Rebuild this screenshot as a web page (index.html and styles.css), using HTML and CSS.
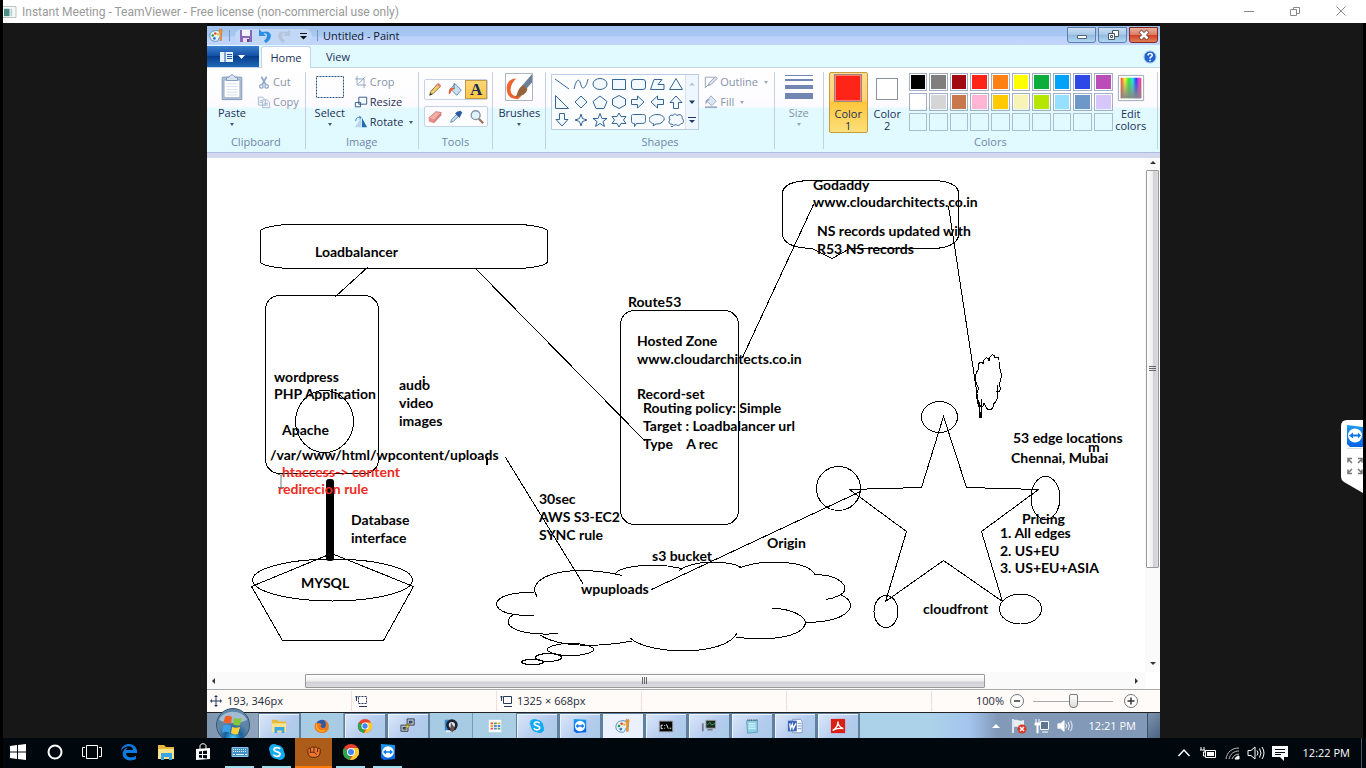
FILE: index.html
```html
<!DOCTYPE html>
<html lang="en">
<head>
<meta charset="utf-8">
<title>Instant Meeting - TeamViewer</title>
<link rel="stylesheet" href="styles.css">
</head>
<body>
<svg class="defs" aria-hidden="true">
  <defs>
    <linearGradient id="rainbow"><stop offset="0" stop-color="#f33"/><stop offset=".2" stop-color="#ff3"/><stop offset=".4" stop-color="#2e3"/><stop offset=".58" stop-color="#2ee"/><stop offset=".75" stop-color="#23f"/><stop offset=".9" stop-color="#f3e"/><stop offset="1" stop-color="#f34"/></linearGradient>
    <linearGradient id="fade" x2="0" y2="1"><stop offset="0" stop-color="#888" stop-opacity="0"/><stop offset="1" stop-color="#888"/></linearGradient>
    <radialGradient id="orb" cy=".9"><stop offset="0" stop-color="#4fd0f4"/><stop offset=".5" stop-color="#175f9c"/><stop offset="1" stop-color="#5f86a8"/></radialGradient>
    <linearGradient id="tv" x2="0" y2="1"><stop offset="0" stop-color="#1c9bf5"/><stop offset="1" stop-color="#0563e6"/></linearGradient>
  </defs>
  <symbol id="palette" viewBox="0 0 18 18"><path d="M1 10C1 5 5 3 9 3s6 3 6 6c0 2-2 2-3 3s0 4-4 4c-4 0-7-2-7-6z" fill="#e2f1fb" stroke="#4b86b8"/><circle cx="4.500" cy="9" r="1.500" fill="#2b9e3c"/><circle cx="7.500" cy="6.500" r="1.500" fill="#e84b2e"/><circle cx="10.500" cy="7.500" r="1.300" fill="#f5b400"/><circle cx="6.500" cy="12.500" r="1.600" fill="#2d73d8"/><path d="M12 3l1-2 1 2 1-2 1 2-1 5v7h-2V8z" fill="#f09a2c" stroke="#b56a22" stroke-width=".5"/></symbol>
  <symbol id="folder" viewBox="0 0 18 18"><path d="M1 2h6l2 2h8v11H1z" fill="#e9b93e"/><path d="M1 6h16v10H1z" fill="#fbe38c"/><path d="M4 10h11v7h-3v-3H7v3H4z" fill="#3aa5e4"/></symbol>
  <symbol id="chrome" viewBox="0 0 18 18"><circle cx="9" cy="9" r="8" fill="#e8402f"/><path d="M9 9L2 5a8 8 0 0 0 6 12z" fill="#2fa24d"/><path d="M9 9h8a8 8 0 0 1-9 8l3-5z" fill="#fccb2e"/><path d="M9 5h7a8 8 0 0 1 0 8l-4-1z" fill="#fccb2e"/><circle cx="9" cy="9" r="4" fill="#fff"/><circle cx="9" cy="9" r="3" fill="#4385f0"/></symbol>
  <symbol id="skype" viewBox="0 0 18 18"><circle cx="6" cy="6" r="5" fill="#14aaf0"/><circle cx="12" cy="12" r="5" fill="#14aaf0"/><circle cx="9" cy="9" r="7" fill="#14aaf0"/><path d="M12 6C11 4 6 4 6 6.600 6 9.500 12 8 12 11c0 3-5.500 3-6.500.5" fill="none" stroke="#fff" stroke-width="1.800"/></symbol>
  <symbol id="teamviewer" viewBox="0 0 18 18"><path d="M2 1l14 1v14l-11 1-3-2z" fill="url(#tv)"/><circle cx="9" cy="9" r="5.800" fill="#fff"/><path d="M4 9l3-2.500v1.700h4V6.500L14 9l-3 2.500V9.800H7v1.700z" fill="#0877e8"/></symbol>
  <symbol id="volume" viewBox="0 0 18 18"><path d="M1 6.500h3L8 3v12l-4-3.500H1z"/><path d="M10 6.500q2 2.500 0 5M12.500 4.500q3 4.500 0 9M15 3q4 6 0 12" fill="none"/></symbol>
</svg>

<header class="tv-title">
  <svg class="tv-icon" viewBox="0 0 15 13"><path d="M0 .5h14v12H0" fill="#f5f8f8" stroke="#b4bcbc"/><path d="M1 3h6v8H1z" fill="#4d8d88"/><path d="M8 3h2v8H8z" fill="#b6d4d0"/></svg>
  <span class="tv-name">Instant Meeting - TeamViewer - Free license (non-commercial use only)</span>
  <div class="tv-controls">
    <button aria-label="Minimize"><svg viewBox="0 0 12 12"><path d="M1 6.500h10"/></svg></button>
    <button aria-label="Restore"><svg viewBox="0 0 12 12"><path d="M1.500 4.500h6v6h-6zM4.500 4V2.500h6v6H8"/></svg></button>
    <button aria-label="Close"><svg viewBox="0 0 12 12"><path d="M1.500 1.500l9 9M10.500 1.500l-9 9"/></svg></button>
  </div>
</header>

<main class="viewer">
  <section class="remote">
    <div class="paint-title">
      <svg class="ic16"><use href="#palette"/></svg>
      <i class="bar"></i>
      <div class="quick">
        <button aria-label="Save"><svg viewBox="0 0 14 14"><path d="M1 1h12v12H1z" fill="#8a68b8"/><path d="M3 1h8v6H3z" fill="#f4f4fc"/><path d="M4 9h6v4H4z" fill="#e9def5"/><path d="M8 10h2v3H8z" fill="#62468e"/></svg></button>
        <button aria-label="Undo"><svg viewBox="0 0 14 14"><path d="M1 0v7h7L5.500 4.500C9 3 11 7 6 12l2 2c8-5 6-14-4-11z" fill="#2a8fe4"/></svg></button>
        <button aria-label="Redo"><svg viewBox="0 0 14 14"><path d="M13 0v7H6l2.500-2.500C5 3 3 7 8 12l-2 2C-2 9 0 0 10 3z" fill="#b5c5dc"/></svg></button>
        <button aria-label="Customize toolbar"><svg viewBox="0 0 14 14"><path d="M4 4.500h7" stroke="#111"/><path d="M4 7h7l-3.500 3.500z" fill="#111"/></svg></button>
      </div>
      <i class="bar"></i>
      <h1>Untitled - Paint</h1>
      <div class="win-controls">
        <button aria-label="Minimize Paint"><svg viewBox="0 0 14 12"><path d="M2.500 6.500h9v3h-9z" fill="#fff" stroke="#53657c"/></svg></button>
        <button aria-label="Restore Paint"><svg viewBox="0 0 14 12"><path d="M6.500 1.500h6v6h-6z" fill="#fff" stroke="#44576f"/><path d="M2.500 4.500h6v6h-6z" fill="#fff" stroke="#44576f"/><path d="M4.500 6.500h2v2h-2z" stroke="#44576f" fill="none"/></svg></button>
        <button class="close" aria-label="Close Paint"><svg viewBox="0 0 14 12"><path d="M3 2l8 8M11 2l-8 8" stroke="#71443f" stroke-width="4"/><path d="M3.500 2.500l7 7M10.500 2.500l-7 7" stroke="#fff" stroke-width="2.500"/></svg></button>
      </div>
    </div>

    <nav class="tabs">
      <button class="file" aria-label="Paint menu"><svg viewBox="0 0 28 12"><path d="M1 1h13v10H1z" fill="#e9f3ff"/><path d="M6 1v10" stroke="#1b58a5"/><path d="M8 3.500h5M8 5.500h5M8 7.500h5" stroke="#1b58a5"/><path d="M19 4h7l-3.500 4z" fill="#fff"/></svg></button>
      <button class="tab on">Home</button>
      <button class="tab">View</button>
      <button class="help" aria-label="Help"><svg viewBox="0 0 14 14"><circle cx="7" cy="7" r="6" fill="#1e62d0" stroke="#9dbdea"/><path d="M5 5.500c0-3 4.500-2.500 4.200 0C9 7 7 7 7 8.500M7 9.800v1.500" fill="none" stroke="#fff" stroke-width="1.600"/></svg></button>
    </nav>

    <div class="ribbon">
      <section class="group clipboard">
        <div class="row">
          <button class="big"><svg class="bigicon" viewBox="0 0 30 30"><path d="M4.500 4.500h21v24h-21z" fill="#b3c3db" stroke="#7f93b6"/><path d="M6.500 7.500h17v19h-17z" fill="#fff" stroke="#9aabc8"/><path d="M9 11.500h12M9 14.500h12M9 17.500h12M9 20.500h12M9 23.500h12" stroke="#d4ddea"/><path d="M9 8V4.500h3C13 1 17 1 18 4.500h3V8z" fill="#dbe5f2" stroke="#7f93b6"/></svg><span>Paste</span><i class="tri"></i></button>
          <div class="stack dim">
            <button><svg viewBox="0 0 16 16"><path d="M5 2l5 9M11 2L6 11" stroke="#8ea6c8" stroke-width="2"/><circle cx="5" cy="13" r="2" fill="none" stroke="#8ea6c8" stroke-width="1.500"/><circle cx="11" cy="13" r="2" fill="none" stroke="#8ea6c8" stroke-width="1.500"/></svg>Cut</button>
            <button><svg viewBox="0 0 16 16"><path d="M1.500 2.500h5l3 3v6h-8zM6.500 5.500h5l3 3v6h-8z" fill="#f5f8fd" stroke="#a0b2d0"/><path d="M3 6.500h3M3 8.500h3M8.500 9.500h4M8.500 11.500h4" stroke="#a0b2d0"/></svg>Copy</button>
          </div>
        </div>
        <h2>Clipboard</h2>
      </section>
      <section class="group image">
        <div class="row">
          <button class="big"><svg class="bigicon" viewBox="0 0 28 28"><path d="M.5 3.500h27v21H.5z" fill="none" stroke="#25517f" stroke-dasharray="2 1"/></svg><span>Select</span><i class="tri"></i></button>
          <div class="stack">
            <button class="dim"><svg viewBox="0 0 16 16"><path d="M3.500 1v10.500H14M1 4.500h10.500V15M5 10l8-8" fill="none" stroke="#8d9fba"/></svg>Crop</button>
            <button><svg viewBox="0 0 16 16"><path d="M5.500 2.500h9v8h-9zM1.500 8.500h6v5h-6z" fill="#f5faff" stroke="#244f80"/></svg>Resize</button>
            <button><svg viewBox="0 0 16 16"><path d="M8 3v11H1z" fill="#bcd5ea"/><path d="M9 3v11h6z" fill="#216cb0"/><path d="M2 7c0-4 3-5 6-4L6 1M8 3L6 5" fill="none" stroke="#257ac0"/></svg>Rotate<i class="tri"></i></button>
          </div>
        </div>
        <h2>Image</h2>
      </section>
      <section class="group tools">
        <div class="toolset">
          <div class="toolrow">
            <button aria-label="Pencil"><svg viewBox="0 0 18 18"><path d="M3 15l1-4 8-9 3 3-8 8z" fill="#f2cf68" stroke="#86653b"/><path d="M11 3l3 3 2-2-3-3z" fill="#e2837a"/><path d="M3 15l1-3 2 2z" fill="#333"/></svg></button>
            <button aria-label="Fill with color"><svg viewBox="0 0 18 18"><path d="M9 2l7 7-5 6-7-7z" fill="#c9def1" stroke="#5b84ad"/><path d="M8 7C3 5 2 9 2 13c1 1 2 0 2-1 1-3 3-4 5-4z" fill="#e56037"/><path d="M8 1v7" stroke="#55789c"/></svg></button>
            <button class="on" aria-label="Text">A</button>
          </div>
          <div class="toolrow">
            <button aria-label="Eraser"><svg viewBox="0 0 18 18"><path d="M2 10l8-7 6 1-8 9z" fill="#f4aca5" stroke="#c67a78"/><path d="M2 10l6 3 0 3-6-2z" fill="#e98b88"/><path d="M8 13l8-9v3l-8 9z" fill="#d07c7a"/></svg></button>
            <button aria-label="Color picker"><svg viewBox="0 0 18 18"><path d="M3 15l1-3 6-6 2 2-6 6z" fill="#c6e2f5" stroke="#5285af"/><path d="M8 5l5 5 1-2 2-4-2-2-4 1z" fill="#285ca2"/></svg></button>
            <button aria-label="Magnifier"><svg viewBox="0 0 18 18"><path d="M11 11l5 5" stroke="#9b7658" stroke-width="2.500"/><circle cx="7.500" cy="7" r="5" fill="#e1f1fb" stroke="#8293a4" stroke-width="1.500"/></svg></button>
          </div>
        </div>
        <h2>Tools</h2>
      </section>
      <section class="group brushes">
        <button class="big"><svg class="bigicon" viewBox="0 0 30 30"><path d="M.5.5h29v29H.5z" fill="#fff" stroke="#a5adb9"/><path d="M12 6C4 6 1 12 2 18c0 6 4 10 12 10l4-4c-7 2-12 0-12-6 0-4 2-8 6-12z" fill="#ee642d"/><path d="M29 1v9l-7 8-4-4z" fill="#6d8098"/><path d="M19 13l5 4c-1 6-6 8-13 9 3-4 2-9 8-13z" fill="#96633a"/></svg><span>Brushes</span><i class="tri"></i></button>
      </section>
      <section class="group shapes">
        <div class="row">
          <div class="gallery">
            <div class="shapegrid">
              <button aria-label="Line"><svg viewBox="0 0 16 16"><path d="M1 3l14 10"/></svg></button>
              <button aria-label="Curve"><svg viewBox="0 0 16 16"><path d="M1 13C4 0 7 4 8 9s5 4 7-6" fill="none"/></svg></button>
              <button aria-label="Oval"><svg viewBox="0 0 16 16"><ellipse cx="8" cy="8" rx="7" ry="5.500"/></svg></button>
              <button aria-label="Rectangle"><svg viewBox="0 0 16 16"><path d="M1.500 3.500h13v10h-13z"/></svg></button>
              <button aria-label="Rounded rectangle"><svg viewBox="0 0 16 16"><rect x="1.500" y="3.500" width="14" height="10" rx="2.500"/></svg></button>
              <button aria-label="Polygon"><svg viewBox="0 0 16 16"><path d="M1.500 13.500L5 3.500h8L9 8.500h6v5z"/></svg></button>
              <button aria-label="Triangle"><svg viewBox="0 0 16 16"><path d="M8 2.500l6.500 11h-13z"/></svg></button>
              <button aria-label="Right triangle"><svg viewBox="0 0 16 16"><path d="M1.500 1.500l13 13h-13z"/></svg></button>
              <button aria-label="Diamond"><svg viewBox="0 0 16 16"><path d="M8 2l6 6-6 6-6-6z"/></svg></button>
              <button aria-label="Pentagon"><svg viewBox="0 0 16 16"><path d="M8 2l7 5.500-3 7H4l-3-7z"/></svg></button>
              <button aria-label="Hexagon"><svg viewBox="0 0 16 16"><path d="M8 1.500l6.500 3.500v6L8 14.500 1.500 11V5z"/></svg></button>
              <button aria-label="Right arrow"><svg viewBox="0 0 16 16"><path d="M1.500 5.500h6v-3.500L14 8l-6.500 6v-3.500h-6z"/></svg></button>
              <button aria-label="Left arrow"><svg viewBox="0 0 16 16"><path d="M14.500 5.500h-6v-3.500L2 8l6.500 6v-3.500h6z"/></svg></button>
              <button aria-label="Up arrow"><svg viewBox="0 0 16 16"><path d="M5.500 14.500v-6H2L8 2l6 6.500h-3.500v6z"/></svg></button>
              <button aria-label="Down arrow"><svg viewBox="0 0 16 16"><path d="M5.500 1.500v6H2L8 14l6-6.500h-3.500v-6z"/></svg></button>
              <button aria-label="Four-point star"><svg viewBox="0 0 16 16"><path d="M8 2l1.500 4.500L14 8 9.500 9.500 8 14 6.500 9.500 2 8l4.500-1.500z"/></svg></button>
              <button aria-label="Five-point star"><svg viewBox="0 0 16 16"><path d="M8 1.500l2 5h5l-4 3 1.500 5L8 11.500 3.500 14.500 5 9.500l-4-3h5z"/></svg></button>
              <button aria-label="Six-point star"><svg viewBox="0 0 16 16"><path d="M8 1l2 3.500h5L12.500 8l2.500 3.500h-5L8 15l-2-3.500H1L3.500 8 1 4.500h5z"/></svg></button>
              <button aria-label="Rounded callout"><svg viewBox="0 0 16 16"><path d="M3.500 2.500h9c4 0 3 2 3 6 0 3-1 3-9 3l-2 3v-3C1 11.500 1.500 10 1.500 7s-1-4.500 2-4.500z"/></svg></button>
              <button aria-label="Oval callout"><svg viewBox="0 0 16 16"><path d="M5 12C-4 9 1 2.500 8 2.500s10 5 4 8.500c-2 1-4 1-5 1l-3 2z"/></svg></button>
              <button aria-label="Cloud callout"><svg viewBox="0 0 16 16"><path d="M4 12C1 13 0 9 2 8 0 5 2 2 5 3.500c1-2 3-2 4 0 3-2 6 0 5 3 3 2 1 6-1 5-2 3-4 2-5 1-2 1-3 1-4-.5zM3 14.500h2"/></svg></button>
            </div>
            <div class="galleryside">
              <button aria-label="Scroll up"><svg viewBox="0 0 8 8"><path d="M1 5.500h6L4 2.500z" fill="#b8c5d6"/></svg></button>
              <button aria-label="Scroll down"><svg viewBox="0 0 8 8"><path d="M1 2.500h6L4 6z" fill="#1d3b66"/></svg></button>
              <button aria-label="More shapes"><svg viewBox="0 0 8 8"><path d="M0 1.500h8" stroke="#1d3b66"/><path d="M1 4h6L4 7z" fill="#1d3b66"/></svg></button>
            </div>
          </div>
          <div class="stack dim">
            <button><svg viewBox="0 0 16 16"><path d="M12 2.500H1.500v12L12 4" fill="none" stroke="#8b9ab3"/><path d="M5 12l1-3 7-7 2 2-7 7z" fill="#dce5f1" stroke="#8b9ab3"/></svg>Outline<i class="tri"></i></button>
            <button><svg viewBox="0 0 16 16"><path d="M8 1l6 6-5 5-6-5z" fill="#dce6f4" stroke="#94a4c0"/><path d="M7 5C2 4 1 7 2 11l2-4z" fill="#94a4c0"/><path d="M1 13h14v2H1z" fill="#9aa9c6"/></svg>Fill<i class="tri"></i></button>
          </div>
        </div>
        <h2>Shapes</h2>
      </section>
      <section class="group size dim">
        <button class="big"><svg class="bigicon" viewBox="0 0 28 28"><path d="M0 2h28v1H0zM0 6h28v2H0zM0 12h28v4H0zM0 20h28v6H0z" fill="#7186b3"/></svg><span>Size</span><i class="tri"></i></button>
      </section>
      <section class="group colors">
        <div class="row">
          <button class="colorbtn on"><span class="swatch red"></span><span>Color<br>1</span></button>
          <button class="colorbtn"><span class="swatch small"></span><span>Color<br>2</span></button>
          <div class="palette">
            <button class="k1" aria-label="Black"></button><button class="k2" aria-label="Gray"></button><button class="k3" aria-label="Dark red"></button><button class="k4" aria-label="Red"></button><button class="k5" aria-label="Orange"></button><button class="k6" aria-label="Yellow"></button><button class="k7" aria-label="Green"></button><button class="k8" aria-label="Turquoise"></button><button class="k9" aria-label="Indigo"></button><button class="k10" aria-label="Purple"></button>
            <button class="k11" aria-label="White"></button><button class="k12" aria-label="Light gray"></button><button class="k13" aria-label="Brown"></button><button class="k14" aria-label="Rose"></button><button class="k15" aria-label="Gold"></button><button class="k16" aria-label="Light yellow"></button><button class="k17" aria-label="Lime"></button><button class="k18" aria-label="Light turquoise"></button><button class="k19" aria-label="Blue-gray"></button><button class="k20" aria-label="Lavender"></button>
            <button class="e" aria-label="Custom 1"></button><button class="e" aria-label="Custom 2"></button><button class="e" aria-label="Custom 3"></button><button class="e" aria-label="Custom 4"></button><button class="e" aria-label="Custom 5"></button><button class="e" aria-label="Custom 6"></button><button class="e" aria-label="Custom 7"></button><button class="e" aria-label="Custom 8"></button><button class="e" aria-label="Custom 9"></button><button class="e" aria-label="Custom 10"></button>
          </div>
          <button class="big edit"><svg class="bigicon" viewBox="0 0 30 30"><path d="M1.500 1.500h27v27h-27z" fill="#fff" stroke="#9aa5b8"/><path d="M4 4h22v22H4z" fill="url(#rainbow)"/><path d="M4 4h22v22H4z" fill="url(#fade)"/></svg><span>Edit<br>colors</span></button>
        </div>
        <h2>Colors</h2>
      </section>
    </div>

    <div class="work">
      <div class="canvas">
        <svg class="drawing" width="1325" height="668" viewBox="207 158 1325 668">
          <g class="lines">
            <rect x="260.500" y="224.500" width="287" height="44" rx="34" ry="7"/>
            <rect x="265.500" y="295.500" width="113" height="178" rx="14"/>
            <ellipse cx="324.500" cy="421.500" rx="29" ry="31"/>
            <path d="M368.500 266.500L335.500 296.500M475.500 268.500L645.500 441.500"/>
            <rect x="620.500" y="310.500" width="118" height="214" rx="14"/>
            <path d="M812 248.500C793 248 782.500 244 782.500 233.500V193.500C782.500 184 796 180.500 812 180.500H932C948 180.500 958.500 185 958.500 193.500V234.500C958.500 243 948 248.500 932 248.500H850L832 258.500z"/>
            <path d="M813.500 204.500L742.500 357.500M948.500 206.500L980.500 416.500M505.500 457.500L583.500 584.500M651.500 589.500L860.500 491.500"/>
            <ellipse cx="332.500" cy="580" rx="80" ry="21"/>
            <path d="M331.500 553.500L413.500 586.500 383.500 640.500H282.500L251.500 586.500z"/>
            <path d="M943.500 416.500L966.500 487.500 1038.500 489.500 981.500 531.500 1002.500 601.500 943.500 560.500 885.500 601.500 906.500 531.500 849.500 489.500 921.500 487.500z"/>
            <ellipse cx="939.500" cy="417" rx="18" ry="15.500"/><ellipse cx="838.500" cy="488.500" rx="22" ry="22"/><ellipse cx="1045.500" cy="498" rx="14.500" ry="21.500"/><ellipse cx="886" cy="611.500" rx="12" ry="16"/><ellipse cx="1020.500" cy="609" rx="21" ry="15"/>
            <path d="M537 596.500C528 583 546 571 580 570.500C598 570.500 612 573 622 575.500M615 574C620 566 654 562 682 568.500M679 570.500C693 560 727 560 742 567.500M739 568C765 558 809 561 815 575C838 573 855 589 838 596C834 598 830 599 826 599.500M841 595C860 603 852 622 805 622.500M772 608C792 609 805 616 805.500 623C803 637 768 642 736 637M737 633C726 656 651 656 630 638M632 641C600 647 560 648 540 635M558 633.500C530 636 508 630 508.500 622C508 618 510 616 515 614M534 615.500C506 616 497 610 496.500 604C497 597 510 592 534 592.500"/>
            <ellipse cx="570.500" cy="649.500" rx="23" ry="6"/><ellipse cx="548.500" cy="657.500" rx="13" ry="4"/><ellipse cx="532.500" cy="662" rx="11" ry="2.500"/>
            <path d="M980 410C977 403 975 393 979 389C974 382 975 372 979 369C977 362 982 360 983 364C984 356 989 357 989 361C990 353 995 354 995 358C1000 355 999 361 999 366C1003 374 1001 381 999 384C1002 391 999 393 996 391M997 385C999 395 997 403 993 404C994 408 991 410 989 410C987 410 985 405 984 403C982 410 981 407 978 402M982 399L981 418M979 402L980 416"/>
          </g>
          <path d="M979 412h3v6h-3zM486 457h2v8h-2z"/>
          <rect x="326" y="479" width="8" height="82" rx="3"/>
          <g class="notes">
            <text x="315" y="257">Loadbalancer</text>
            <text x="274" y="382">wordpress</text>
            <text x="274" y="399">PHP Application</text>
            <text x="282" y="435">Apache</text>
            <text x="270" y="460">/var/www/html/wpcontent/uploads</text>
            <text x="399" y="390">audo</text>
            <text x="422" y="386">i</text>
            <text x="399" y="408">video</text>
            <text x="399" y="426">images</text>
            <text x="351" y="525">Database</text>
            <text x="351" y="543">interface</text>
            <text x="301" y="588">MYSQL</text>
            <text x="539" y="504">30sec</text>
            <text x="539" y="522">AWS S3-EC2</text>
            <text x="539" y="540">SYNC rule</text>
            <text x="652" y="561">s3 bucket</text>
            <text x="581" y="594">wpuploads</text>
            <text x="767" y="548">Origin</text>
            <text x="628" y="307">Route53</text>
            <text x="637" y="346">Hosted Zone</text>
            <text x="637" y="364">www.cloudarchitects.co.in</text>
            <text x="637" y="399">Record-set</text>
            <text x="643" y="413">Routing policy: Simple</text>
            <text x="643" y="431">Target : Loadbalancer url</text>
            <text x="643" y="449">Type &#160;&#160; A rec</text>
            <text x="813" y="190">Godaddy</text>
            <text x="813" y="207">www.cloudarchitects.co.in</text>
            <text x="817" y="236">NS records updated with</text>
            <text x="817" y="254">R53 NS records</text>
            <text x="1013" y="443">53 edge locations</text>
            <text x="1088" y="452">m</text>
            <text x="1011" y="463">Chennai, Mubai</text>
            <text x="1022" y="524">Pricing</text>
            <text x="1000" y="538">1. All edges</text>
            <text x="1000" y="556">2. US+EU</text>
            <text x="1000" y="573">3. US+EU+ASIA</text>
            <text x="923" y="614">cloudfront</text>
            <g class="rednote"><text x="282" y="477">htaccess-&gt; content</text><text x="278" y="494">redirecion rule</text></g>
          </g>
          <path d="M278 474.500h2l1 1 1-1h2M281 475v12M278 487.500h6" fill="none" stroke="#777"/>
        </svg>
      </div>
      <div class="vscroll"><i class="arrow up"></i><div class="thumb"><svg viewBox="0 0 8 8"><path d="M0 1.500h7M0 3.500h7M0 5.500h7" stroke="#666"/></svg></div><i class="arrow down"></i></div>
      <div class="hscroll"><i class="arrow left"></i><div class="thumb"><svg viewBox="0 0 8 8"><path d="M1.500 0v7M3.500 0v7M5.500 0v7" stroke="#666"/></svg></div><i class="arrow right"></i></div>
    </div>

    <footer class="status">
      <span class="cell"><svg viewBox="0 0 12 12"><path d="M1 6h10M6 1v10" stroke="#24395c"/><path d="M0 6l2-2v4zM12 6l-2-2v4zM6 0L4 2h4zM6 12l-2-2h4z" fill="#24395c"/></svg>193, 346px</span>
      <span class="cell"><svg viewBox="0 0 12 12"><path d="M3.500 1.500h8v7h-8z" fill="none" stroke="#24395c" stroke-dasharray="2 1"/><path d="M1.500 1v5M0 2.500l1.500-1.500L3 2.500M4 11.500h8" fill="none" stroke="#24395c"/></svg></span>
      <span class="cell"><svg viewBox="0 0 12 12"><path d="M3.500 1.500h8v7h-8zM1.500 1v5M0 2.500l1.500-1.500L3 2.500M4 11.500h8" fill="none" stroke="#24395c"/></svg>1325 × 668px</span>
      <span class="cell"></span>
      <span class="cell"></span>
      <div class="zoom">
        <label for="zoom">100%</label>
        <button aria-label="Zoom out"><svg viewBox="0 0 16 16"><circle cx="8" cy="8" r="6.500" fill="#fff" stroke="#777"/><path d="M5 8h6" stroke="#333" stroke-width="1.500"/></svg></button>
        <input id="zoom" type="range" min="0" max="100" value="50">
        <button aria-label="Zoom in"><svg viewBox="0 0 16 16"><circle cx="8" cy="8" r="6.500" fill="#fff" stroke="#777"/><path d="M4.500 8h7M8 4.500v7" stroke="#333" stroke-width="1.500"/></svg></button>
      </div>
    </footer>

    <div class="bar7">
      <button class="start7" aria-label="Start"><svg viewBox="0 0 36 36"><circle cx="18" cy="18" r="16.500" fill="url(#orb)" stroke="#36566f"/><path d="M4 13C8 2 28 2 32 13 25 17 11 17 4 13z" fill="#cfe3ef" opacity=".6"/><path d="M10 10c3-2 5-1 7 0l-1 7c-3-1-5-2-8 0z" fill="#f0602a"/><path d="M19 11c3 1 5 1 8 0l-2 7c-3 1-5 0-7-1z" fill="#86c63c"/><path d="M8 19c3-2 5-1 8 0l-1 7c-3-1-5-2-8 0z" fill="#3d9fe8"/><path d="M17 20c3 1 5 1 8 0l-2 7c-3 1-5 0-7-1z" fill="#ffd23c"/></svg></button>
      <div class="tasks">
        <button class="run" aria-label="Explorer"><svg><use href="#folder"/></svg></button>
        <button class="blue" aria-label="Firefox"><svg viewBox="0 0 18 18"><circle cx="9" cy="9" r="7" fill="#2b5aa8"/><path d="M2 5l2 1c2-1 4 0 5 2-2 0-2 2 0 3 3 1 5-1 4-5l-1-4c7 5 6 15-3 15C1 17-1 10 2 5z" fill="#ee7a18"/><path d="M3 7c-1 7 5 9 9 7" fill="none" stroke="#fbb02c" stroke-width="1.500"/></svg></button>
        <button class="run" aria-label="Chrome"><svg><use href="#chrome"/></svg></button>
        <button class="run" aria-label="PuTTY"><svg viewBox="0 0 18 18"><path d="M8 1h8v7H8zM1 8h8v7H1z" fill="#b9bec9" stroke="#303848"/><path d="M10 3h4v3h-4zM3 10h4v3H3z" fill="#29447c"/><path d="M13 5L8 8l3 1-6 5 3-5-2-1z" fill="#ffe22e" stroke="#584f10" stroke-width=".5"/></svg></button>
        <button class="blue" aria-label="Media tool"><svg viewBox="0 0 18 18"><path d="M2 2h8v12H2z" fill="#3c84c4"/><circle cx="10" cy="8" r="6.500" fill="#1c2234"/><circle cx="10" cy="8" r="3.500" fill="#d8e4ee"/><path d="M9 5l4 6-2 5-3-2z" fill="#6a5148"/><path d="M3 14h5v2H3z" fill="#eee"/></svg></button>
        <button aria-label="Apps"><svg viewBox="0 0 18 18"><path d="M2 2h14v14H2z" fill="#fafafa"/><path d="M4 5h3v2H4zM4 11h3v2H4z" fill="#e84f3d"/><path d="M8 5h3v2H8zM12 11h3v2h-3z" fill="#48a750"/><path d="M12 5h3v2h-3zM4 8h3v2H4z" fill="#f0ab32"/><path d="M8 8h3v2H8zM12 8h3v2h-3zM8 11h3v2H8z" fill="#4a86dc"/></svg></button>
        <button class="run" aria-label="Skype"><svg><use href="#skype"/></svg></button>
        <button class="run" aria-label="TeamViewer"><svg><use href="#teamviewer"/></svg></button>
        <button class="run active" aria-label="Paint"><svg><use href="#palette"/></svg></button>
        <button class="run" aria-label="Command Prompt"><svg viewBox="0 0 18 18"><path d="M1.500 3.500h15v12h-15z" stroke="#999"/><path d="M5.500 8h-2v4h2M7.500 8v1M7.500 11v1M9.500 7l2 5M13 11.500h2" fill="none" stroke="#fff"/></svg></button>
        <button class="run" aria-label="Remote computer"><svg viewBox="0 0 18 18"><path d="M5.500 2.500h11v9h-11z" fill="#1b2a24" stroke="#aab2ac"/><path d="M7 8l3-3 2 3 4-2" fill="none" stroke="#3fae54"/><path d="M9 12h4v2H7v-1zM1 6h2v9H1z" fill="#778"/></svg></button>
        <button class="run" aria-label="Notepad"><svg viewBox="0 0 18 18"><path d="M3 3h12v13l-11 1z" fill="#8ad1e6" stroke="#5f9bb4"/><path d="M5 6h8M5 8h8M5 10h8M5 12h8" stroke="#dff5fa"/><path d="M4 2.500h11" stroke="#567" stroke-dasharray="1 1" stroke-width="2"/></svg></button>
        <button class="run" aria-label="Word"><svg viewBox="0 0 18 18"><path d="M6 1.500h9l2 2v13H6z" fill="#f6f9ff" stroke="#7e95bd"/><path d="M1 3h10v12H1z" fill="#3b66b8"/><path d="M3 6l1 6 2-5 1 5 3-6" fill="none" stroke="#fff" stroke-width="1.500"/><path d="M12 6h4M12 9h4M12 12h4" stroke="#7e95bd"/></svg></button>
        <button class="run" aria-label="Adobe Reader"><svg viewBox="0 0 18 18"><path d="M1 1h16v16H1z" fill="#da1f17"/><path d="M3 14c4-2 6-6 6-10 0 5 3 7 6 8-5-1-9 0-12 2z" fill="none" stroke="#fff" stroke-width="1.500"/></svg></button>
      </div>
      <div class="tray7">
        <svg viewBox="0 0 16 16"><path d="M4 10h8L8 6z" fill="#fff"/></svg>
        <svg viewBox="0 0 16 16"><path d="M2 1v14" stroke="#fff" stroke-width="1.500"/><path d="M3 2c4-1 5 2 10 0v7c-5 2-6-1-10 0z" fill="#e8eef4"/><circle cx="11" cy="11" r="4.500" fill="#dc3524"/><path d="M9 9l4 4M13 9l-4 4" stroke="#fff" stroke-width="1.500"/></svg>
        <svg viewBox="0 0 16 16"><path d="M6.500 3.500h8v8h-8z" fill="#5d7692" stroke="#fff"/><path d="M8 14h6M2 1v4M5 1v4M1 5h5v2H4v8H3V7H1z" stroke="#fff" fill="#fff"/></svg>
        <svg class="vol" viewBox="0 0 18 18"><use href="#volume"/></svg>
        <time>12:21 PM</time>
        <i class="peek"></i>
      </div>
    </div>
  </section>

  <aside class="tv-tab">
    <svg viewBox="0 0 22 74"><path d="M22 0H6Q0 0 0 6V57Q0 60 3 62L22 73z" fill="#fff"/><path d="M6 5l16 2v20H9l-3-3z" fill="url(#tv)"/><circle cx="14" cy="15.500" r="7" fill="#fff"/><path d="M8 15.500l4-3v2h5v-2l3 3-3 3v-2h-5v2z" fill="#0877e8"/><path d="M6 28.500h15" stroke="#ddd"/><path d="M11 43l-4-4M7 42.500v-4h4M17 43l4-4M17 38.500h4v4M11 49l-4 4M7 49.500v4h4M17 49l4 4M21 49.500v4h-4" fill="none" stroke="#777" stroke-width="1.500"/></svg>
  </aside>
</main>

<footer class="bar10">
  <div class="apps">
    <button aria-label="Start"><svg viewBox="0 0 18 18"><path d="M1 3l7-1v6.500H1zM9 2l8-1v7.500H9zM1 9.500h7V16l-7-1zM9 9.500h8V17l-8-1z" fill="#fff"/></svg></button>
    <button aria-label="Cortana"><svg viewBox="0 0 18 18"><circle cx="9" cy="9" r="6.500" fill="none" stroke="#fff" stroke-width="2"/></svg></button>
    <button class="wide" aria-label="Task view"><svg viewBox="0 0 22 18"><path d="M5.500 2.500h11v13h-11zM4 4.500H1.500v9H4M18 4.500h2.500v9H18" fill="none" stroke="#fff"/></svg></button>
    <button aria-label="Edge"><svg viewBox="0 0 18 18"><path d="M1 8C2 3 5 1 9 1c5 0 8 4 8 7v2H6c0 5 6 5 10 3v3c-8 4-15-1-13-7 1-3 3-4 5-4.500C6.500 5.500 6 7 6 7h7c0-5-8-5-12 1z" fill="#0b7be0"/></svg></button>
    <button aria-label="File Explorer"><svg><use href="#folder"/></svg></button>
    <button aria-label="Store"><svg viewBox="0 0 18 18"><path d="M2 6l14-1v11l-14 1z" fill="#fff"/><path d="M6 6V3c0-3 6-3 6 0v3" fill="none" stroke="#fff"/><path d="M5 8.500l3-.5v3H5zM9 8l4-.5V11H9zM5 12h3v3l-3-.5zM9 12h4v3.500L9 15z" fill="#000a10"/></svg></button>
    <button class="open" aria-label="Keyboard"><svg viewBox="0 0 18 18"><path d="M1 4.500h16v9H1z" fill="#4292cc" stroke="#8cc4ec"/><path d="M2 6.500h14M2 8.500h14" stroke="#eaf6ff" stroke-dasharray="1 1"/><path d="M2 11.500h2M5 11.500h8M14 11.500h2" stroke="#eaf6ff"/></svg></button>
    <button class="open" aria-label="Skype (local)"><svg><use href="#skype"/></svg></button>
    <button class="orange" aria-label="Mikogo"><svg class="hand" viewBox="0 0 18 18"><path d="M2 7c0-2 2-3 3-2 1-2 3-2 4-1 1-1 3-1 4 1 2-1 3 0 3 2 0 6-2 8-7 8S2 13 2 7z" fill="#f2762d" stroke="#401c08"/><path d="M5 5v4M9 4v5M13 5v4M4 10c4-2 7 0 8 2" fill="none" stroke="#401c08"/></svg></button>
    <button class="open" aria-label="Chrome (local)"><svg><use href="#chrome"/></svg></button>
    <button class="open" aria-label="TeamViewer (local)"><svg><use href="#teamviewer"/></svg></button>
  </div>
  <div class="tray10">
    <svg viewBox="0 0 18 18"><path d="M3.500 12l5.500-6 5.500 6" stroke-width="1.500"/></svg>
    <svg viewBox="0 0 18 18"><path d="M6.500 6.500h10v7h-10zM2 3v3M5 3v3M1 6h5v2H4.500v4H6"/><path d="M8 8h7v4H8z" fill="#fff" stroke="none"/></svg>
    <svg viewBox="0 0 18 18"><path d="M3 15C4 8 9 4 16 4M6 15c1-5 5-8 10-8M9 15c1-3 4-5 7-5" stroke="#bbb"/><path d="M12 15c1-2 2-3 4-3v3z" fill="#fff"/></svg>
    <svg viewBox="0 0 18 18"><use href="#volume"/></svg>
    <svg viewBox="0 0 18 18"><path d="M1 2h16v11h-4v4l-4-4H1z" fill="#fff" stroke="none"/><path d="M4 5.500h10M4 8.500h10M4 10.500h6" stroke="#000a10"/></svg>
    <time>12:22 PM</time>
  </div>
</footer>
</body>
</html>
```
FILE: styles.css
```css
* { box-sizing: border-box; }

body {
  margin: 0;
  height: 100vh;
  display: flex;
  flex-direction: column;
  border: 0 solid #000;
  border-left-width: 3px;
  background: #171717;
  color: #1b2f56;
  font: 11px/14px "Open Sans", "Noto Sans", sans-serif;
}

button {
  display: flex;
  align-items: center;
  justify-content: center;
  margin: 0;
  padding: 0;
  border: 0;
  background: none;
  color: inherit;
  font: inherit;
}

h1, h2 { margin: 0; font: inherit; }
svg { display: block; flex: none; }
.defs { position: absolute; width: 0; height: 0; }

/* Outer viewer window */
.tv-title {
  display: flex;
  align-items: center;
  height: 23px;
  flex: none;
  background: #fff;
  color: #999;
}
.tv-icon { width: 14px; height: 12px; }
.tv-name { margin-left: 5px; font: 12px/16px Roboto, sans-serif; }
.tv-controls { display: flex; margin-left: auto; padding: 0 2px 2px 0; }
.tv-controls button { width: 46px; }
.tv-controls svg { width: 12px; height: 12px; fill: none; stroke: #888; }

.viewer {
  position: relative;
  flex: 1;
  min-height: 0;
  display: grid;
  grid-template-columns: 204fr 953fr 203fr;
  border-right: 3px solid #000;
}
.remote {
  grid-column: 2;
  min-width: 0;
  min-height: 0;
  display: flex;
  flex-direction: column;
  overflow: hidden;
  border-top: 3px solid #0a0a0a;
}
.tv-tab { position: absolute; right: 0; top: 397px; }
.tv-tab svg { width: 22px; height: 74px; }

/* Paint caption */
.paint-title {
  display: flex;
  align-items: center;
  height: 19px;
  flex: none;
  padding: 0 2px;
  background: linear-gradient(#9fc2ee, #a8c8f2 50%, #bcd2fb 60%, #c2d5fd);
  color: #10182c;
}
.ic16 { width: 15px; height: 15px; }
.bar { width: 1px; height: 11px; margin: 0 5px; background: #7c93b8; }
.quick { display: flex; gap: 5px; padding: 0 2px 0 4px; border-radius: 8px; background: #c3d8f6; }
.quick svg { width: 14px; height: 14px; }
.win-controls { display: flex; align-self: flex-start; gap: 2px; margin-left: auto; }
.win-controls button {
  width: 29px;
  height: 16px;
  margin-top: 1px;
  border: 1px solid #5f7fa8;
  border-radius: 0 0 3px 3px;
  background: linear-gradient(#cbdff5, #a7c6e6 50%, #8fb9de 50%, #b1d8f4);
}
.win-controls .close { border-color: #7e2a22; background: linear-gradient(#eab0a0, #dd7a62 50%, #ce3e20 50%, #e27f5a); }
.win-controls svg { width: 14px; height: 12px; }

/* Ribbon */
.tabs {
  display: flex;
  height: 23px;
  flex: none;
  padding-top: 1px;
  background: #e0faff;
  border-bottom: 1px solid #c4d2ec;
}
.file { width: 52px; background: linear-gradient(#3d7fcf, #0f4da0 50%, #083d8c 50%, #1f68b8); }
.file svg { width: 28px; height: 12px; }
.tab { width: 50px; margin-left: 2px; }
.tab.on { margin-bottom: -1px; border: 1px solid #c4d2ec; border-bottom: 0; border-radius: 3px 3px 0 0; background: #fff; }
.help { margin-left: auto; margin-right: 3px; }
.help svg { width: 14px; height: 14px; }

.ribbon {
  display: grid;
  grid-template-columns: 99fr 113fr 75fr 53fr 229fr 49fr 335fr;
  height: 90px;
  flex: none;
  padding: 4px 2px 4px 0;
  border-bottom: 5px solid #d3d8ee;
  background: linear-gradient(#fff, #fdfbff 45%, #e2faff 48%, #dffaff);
  box-shadow: inset 0 -1px #aebde0;
}
.group {
  display: flex;
  flex-direction: column;
  min-width: 0;
  padding-top: 1px;
  border-right: 1px solid #c3d0e6;
}
.group h2 { margin-top: auto; text-align: center; color: #7085a8; }
.row { display: flex; }
.dim { color: #8593a8; }
.big { flex-direction: column; align-items: center; justify-content: flex-start; width: 50px; line-height: 12px; }
.bigicon { width: 28px; height: 28px; margin-bottom: 6px; }
.tri {
  width: 0;
  height: 0;
  margin-left: 4px;
  border: 2px solid transparent;
  border-top: 3px solid currentColor;
  border-bottom: 0;
  opacity: .8;
}
.big .tri { margin: 4px 0 0; }
.stack { display: flex; flex-direction: column; gap: 4px; padding-top: 1px; }
.stack button { justify-content: flex-start; gap: 2px; height: 16px; }
.stack svg { width: 14px; height: 14px; }
.clipboard .stack svg { width: 14px; height: 16px; }
.image .big { width: 48px; }

.toolset { display: flex; flex-direction: column; gap: 6px; padding: 6px 4px 0 5px; }
.toolrow { display: flex; height: 21px; border: 1px solid #c5d2e8; border-radius: 2px; background: #fdfdff; }
.toolrow button { flex: 1; }
.toolrow svg { width: 16px; height: 16px; }
.toolrow .on { border: 1px solid #c29a46; background: linear-gradient(#fbd677, #ffc646); color: #1a2c50; font: bold 17px/18px "Liberation Serif", serif; }

.brushes .big, .size .big { width: 100%; }
.brushes .bigicon, .size .bigicon { width: 30px; }

.gallery { display: flex; margin: 1px 5px 0; border: 1px solid #bccce6; background: #fcfdff; }
.shapegrid { display: grid; grid-template-columns: repeat(7, 19px); grid-auto-rows: 18px; }
.shapegrid svg { width: 16px; height: 16px; fill: #f3faff; stroke: #356594; }
.galleryside { display: grid; grid-template-rows: repeat(3, 18px); width: 13px; border-left: 1px solid #d5e0f0; background: #eef7ff; }
.galleryside svg { width: 8px; height: 8px; }

.colorbtn {
  flex-direction: column;
  justify-content: flex-start;
  width: 39px;
  height: 61px;
  padding-top: 2px;
  line-height: 12px;
}
.colors { padding-top: 0; }
.colors .row { padding-left: 5px; }
.colorbtn.on { border: 1px solid #c79b3e; border-radius: 2px; background: linear-gradient(#fbdc8e, #fdd27a 45%, #ffc63c 50%, #fce07c); padding-top: 1px; }
.swatch { width: 28px; height: 28px; margin-bottom: 6px; border: 1px solid #987; outline: 1px solid #fff6; outline-offset: -2px; background: #fff; }
.swatch.red { background: #ff2318; }
.swatch.small { width: 22px; height: 22px; margin: 4px 0 8px; border-color: #8a93a0; }
.palette {
  display: grid;
  grid-template-columns: repeat(10, 1fr);
  grid-auto-rows: 18px;
  gap: 2px;
  width: 204px;
  margin: 1px 0 0 2px;
}
.palette button { border: 1px solid #a3afc2; background-clip: content-box; padding: 1px; background-color: #fff; }
.palette .e { background: none; border-color: #a9bcd2; }
.palette .k1 { background-color: #000; } .palette .k2 { background-color: #7f7f7f; }
.palette .k3 { background-color: #a00a10; } .palette .k4 { background-color: #ff2318; }
.palette .k5 { background-color: #ff8114; } .palette .k6 { background-color: #ffff00; }
.palette .k7 { background-color: #0cad3b; } .palette .k8 { background-color: #00a3f8; }
.palette .k9 { background-color: #2e48e8; } .palette .k10 { background-color: #bb4db8; }
.palette .k12 { background-color: #d5d5d5; } .palette .k13 { background-color: #c9784b; }
.palette .k14 { background-color: #ffb5d3; } .palette .k15 { background-color: #ffcb00; }
.palette .k16 { background-color: #f8f3b6; } .palette .k17 { background-color: #b6e600; }
.palette .k18 { background-color: #96e0ff; } .palette .k19 { background-color: #6d98c7; }
.palette .k20 { background-color: #d6c6fc; }
.edit { width: 36px; margin-top: 2px; }

/* Drawing area */
.work {
  flex: 1;
  min-height: 0;
  display: grid;
  grid-template-columns: minmax(0, 1fr) 15px;
  grid-template-rows: minmax(0, 1fr) 17px;
  background: #fff;
}
.canvas { overflow: hidden; }
.lines { fill: none; stroke: #000; shape-rendering: crispEdges; }
.notes { fill: #000; font: bold 14px Lato, sans-serif; }
.rednote { fill: #f02a20; }
.vscroll, .hscroll { display: flex; align-items: center; background: #fafafb; }
.vscroll { flex-direction: column; grid-row: 1 / 2; grid-column: 2; }
.hscroll { grid-row: 2; grid-column: 1; }
.thumb { display: flex; align-items: center; justify-content: center; border: 1px solid #999; border-radius: 1px; }
.thumb svg { width: 8px; height: 8px; }
.vscroll .thumb { width: 13px; height: 398px; background: linear-gradient(90deg, #fff, #eee 50%, #cfcfd5 60%, #dcdce0); }
.hscroll .thumb { width: 680px; height: 14px; background: linear-gradient(#fff, #eee 50%, #cfcfd5 60%, #dcdce0); }
.arrow { border: 3px solid transparent; }
.up { border-bottom-color: #333; border-top: 0; margin: 3px 0 6px; }
.down { border-top-color: #333; border-bottom: 0; margin: auto 0 7px; }
.left { border-right-color: #333; border-left: 0; margin: 0 90px 0 5px; }
.right { border-left-color: #333; border-right: 0; margin: 0 7px 0 auto; }

/* Status bar */
.status {
  display: flex;
  align-items: center;
  height: 24px;
  flex: none;
  border-top: 1px solid #aaa;
  border-bottom: 1px solid #222;
  background: #fffbf9;
  color: #252a3a;
}
.cell { display: flex; align-items: center; gap: 5px; width: 145px; height: 20px; padding-left: 3px; border-right: 1px solid #f6dcda; }
.cell svg { width: 12px; height: 12px; }
.zoom { display: flex; align-items: center; margin-left: auto; padding-right: 21px; }
.zoom svg { width: 16px; height: 16px; }
.zoom button { margin-left: 5px; }
.zoom input { width: 80px; height: 16px; margin: 0 5px 0 8px; appearance: none; background: linear-gradient(#aaa, #aaa) center / 100% 1px no-repeat; }
.zoom input::-webkit-slider-thumb { appearance: none; width: 9px; height: 14px; border: 1px solid #777; border-radius: 2px 2px 4px 4px; background: linear-gradient(#fff, #ddd); }

/* Remote taskbar */
.bar7 {
  display: flex;
  height: 25px;
  flex: none;
  background: linear-gradient(90deg, #7f96b0, #8fa5bd 50px, #a9cde2 60px, #abd2e8 76%, #a4c4ee 80%, #8299b8 83%);
}
.start7 { align-items: flex-start; width: 51px; height: 25px; }
.start7 svg { width: 36px; height: 36px; margin-top: -6px; }
.tasks { display: flex; }
.tasks button { width: 43px; }
.tasks svg { width: 16px; height: 16px; }
.tasks .run { border: 1px solid #61809e; border-width: 1px 2px 0 1px; background: linear-gradient(135deg, #dce8fa, #b4cbee 60%, #a9cbe6); box-shadow: inset 1px 1px #e8f3fc; }
.tasks .blue { border-right: 1px solid #7b9ab6; background: #a6cbe3; }
.tasks .active { background: #eaf1fd; }
.tray7 { display: flex; align-items: center; gap: 7px; margin-left: auto; color: #fff; }
.tray7 svg { width: 16px; height: 16px; }
.tray7 .vol { fill: #fff; stroke: #fff; }
.tray7 time { margin: 0 4px 0 9px; }
.peek { width: 13px; height: 25px; border-left: 1px solid #3c5068; background: linear-gradient(135deg, #7b93ad, #4c6482); }

/* Local taskbar */
.bar10 {
  display: flex;
  justify-content: space-between;
  height: 30px;
  flex: none;
  background: #00080e;
  color: #fff;
}
.apps { display: flex; margin-left: -3px; }
.apps button { width: 37px; border-bottom: 2px solid transparent; }
.apps button:first-child { width: 36px; }
.apps svg { width: 18px; height: 18px; }
.apps .wide svg { width: 22px; }
.apps .hand { width: 16px; height: 16px; }
.apps .open { width: 29px; margin: 0 4px; border-color: #9fdcec; }
.apps .orange { background: #ad5c19; border-color: #ff7a08; }
.tray10 { display: flex; align-items: center; gap: 6px; margin-right: 4px; padding-right: 11px; border-right: 1px solid #4c565c; }
.tray10 svg { width: 18px; height: 18px; fill: none; stroke: #fff; }
.tray10 time { margin-left: 8px; }
```
